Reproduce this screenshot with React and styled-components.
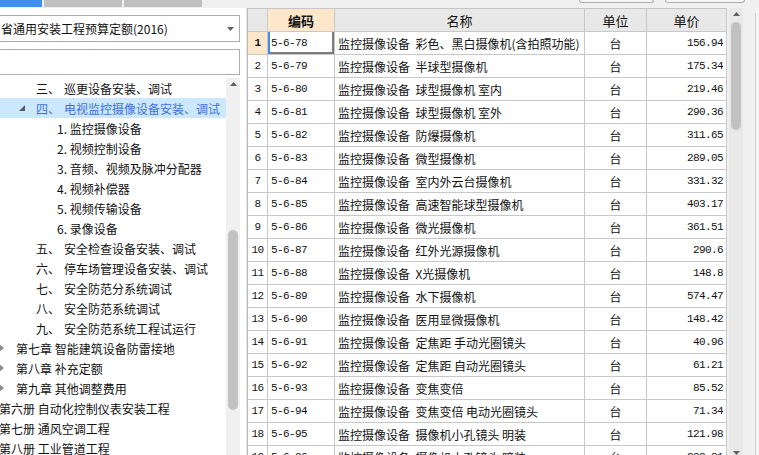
import React from 'react';
import styled, { createGlobalStyle } from 'styled-components';

const GlobalStyle = createGlobalStyle`
  html, body { margin: 0; padding: 0; background: #f0f0f0; }
  body { overflow: hidden; }
`;

const CJK = `"Noto Sans CJK SC", "Noto Sans", sans-serif`;
const NUM = `"Liberation Mono", "DejaVu Sans Mono", monospace`;

const Screen = styled.div`
  width: 759px;
  height: 455px;
  overflow: hidden;
  background: #f0f0f0;
  display: flex;
  flex-direction: column;
  font-family: ${CJK};
`;

const TopStrip = styled.div`
  height: 8px;
  flex: none;
  display: flex;
  align-items: flex-start;
  gap: 2px;
  background: #f0f0f0;
`;

const Tab = styled.div`
  width: ${p => p.$w}px;
  height: 7px;
  background: ${p => (p.$active ? '#3f8ef0' : '#c0c0c0')};
`;

const Spacer = styled.div`
  flex: 1;
`;

const ButtonStub = styled.div`
  width: ${p => p.$w}px;
  height: 3px;
  margin-right: ${p => p.$mr}px;
  box-sizing: border-box;
  border: 1px solid #adadad;
  border-top: none;
  border-radius: 0 0 3px 3px;
  background: #f7f7f7;
`;

const Main = styled.div`
  display: flex;
  align-items: flex-start;
  height: 447px;
`;

const LeftPanel = styled.div`
  width: 246px;
  height: 447px;
  flex: none;
  background: #fff;
  display: flex;
  flex-direction: column;
  padding-top: 7px;
  box-sizing: border-box;
`;

const Field = styled.div`
  width: 240px;
  height: ${p => p.$h}px;
  margin-top: ${p => p.$mt || 0}px;
  box-sizing: border-box;
  border: 1px solid #acacac;
  border-left: none;
  display: flex;
  align-items: center;
  justify-content: space-between;
  padding: 0 5px 0 1px;
  font-size: 12px;
  color: #111;
  white-space: nowrap;
  overflow: hidden;
  flex: none;
`;

const TreeArea = styled.div`
  margin-top: 3px;
  width: 240px;
  flex: 1;
  display: flex;
  overflow: hidden;
`;

const TreeList = styled.div`
  width: 226px;
  display: flex;
  flex-direction: column;
  overflow: hidden;
`;

const TreeRow = styled.div`
  height: 20px;
  flex: none;
  display: flex;
  align-items: center;
  padding-left: ${p => p.$indent}px;
  background: ${p => (p.$selected ? '#cce8ff' : 'transparent')};
  color: ${p => (p.$selected ? '#3f6fdc' : '#111')};
  font-size: 12px;
  white-space: nowrap;
`;

const Twisty = styled.span`
  width: ${p => p.$w}px;
  flex: none;
  display: flex;
  align-items: center;
  padding-left: ${p => p.$pl || 0}px;
  box-sizing: border-box;
`;

const NumLabel = styled.span`
  width: 28px;
  flex: none;
`;

const ScrollTrack = styled.div`
  width: 14px;
  flex: none;
  background: ${p => p.$bg};
  display: flex;
  flex-direction: column;
  align-items: center;
  height: ${p => (p.$h ? `${p.$h}px` : 'auto')};
  margin-left: ${p => p.$ml || 0}px;
`;

const ArrowBox = styled.div`
  height: 12px;
  flex: none;
  display: flex;
  align-items: center;
  justify-content: center;
`;

const Thumb = styled.div`
  width: 10px;
  height: ${p => p.$h}px;
  margin-top: ${p => p.$mt}px;
  border-radius: 5px;
  background: #c2c2c2;
  flex: none;
`;

const Divider = styled.div`
  width: 1px;
  height: 447px;
  background: #e2e2e2;
  flex: none;
`;

const TableGrid = styled.div`
  width: 480px;
  height: 447px;
  flex: none;
  box-sizing: border-box;
  border-left: 1px solid #bdbdbd;
  border-top: 1px solid #c6c6c6;
  background: #fff;
  display: flex;
  flex-direction: column;
  overflow: hidden;
`;

const GridRow = styled.div`
  display: grid;
  grid-template-columns: 20px 67px 250px 62px 80px;
  height: ${p => (p.$header ? 23 : 23)}px;
  flex: none;
  box-sizing: border-box;
  border-bottom: 1px solid #c8c8c8;
  background: ${p => (p.$header ? '#e8e8e8' : '#fff')};
`;

const Cell = styled.div`
  box-sizing: border-box;
  border-right: 1px solid #c8c8c8;
  display: flex;
  align-items: center;
  justify-content: ${p => p.$align || 'flex-start'};
  padding: ${p => (p.$align === 'flex-end' ? '0 3px 0 0' : p.$align === 'center' ? '0' : '0 0 0 3px')};
  background: ${p => (p.$peach ? '#fde6c9' : 'transparent')};
  font-family: ${p => (p.$num ? NUM : CJK)};
  font-size: ${p => (p.$num ? '11px' : p.$head ? '13px' : '12px')};
  letter-spacing: ${p => (p.$num ? '-0.6px' : '0')};
  font-weight: ${p => (p.$bold ? 700 : 400)};
  color: #111;
  white-space: nowrap;
  overflow: hidden;
  box-shadow: ${p => (p.$focus ? 'inset 2px 0 0 #3b8ff0, inset -2px -2px 0 #7c7c7c' : 'none')};
`;

const RightEdge = styled.div`
  flex: 1;
  height: 447px;
  display: flex;
`;

const EdgeFill = styled.div`
  width: ${p => (p.$w ? `${p.$w}px` : 'auto')};
  flex: ${p => (p.$w ? 'none' : 1)};
  background: ${p => p.$bg};
  margin-top: ${p => p.$mt || 0}px;
`;

const UpArrow = () => (
  <svg width="7" height="4" viewBox="0 0 7 4">
    <path d="M0 4 L3.5 0 L7 4 Z" fill="#606060" />
  </svg>
);

const DownArrow = () => (
  <svg width="7" height="4" viewBox="0 0 7 4">
    <path d="M0 0 L3.5 4 L7 0 Z" fill="#606060" />
  </svg>
);

const ExpandedIcon = () => (
  <svg width="6" height="6" viewBox="0 0 6 6">
    <path d="M6 0 L6 6 L0 6 Z" fill="#5a5a5a" />
  </svg>
);

const CollapsedIcon = () => (
  <svg width="5" height="8" viewBox="0 0 5 8" style={{ marginLeft: -1 }}>
    <path d="M0 0 L5 4 L0 8 Z" fill="#8c8c8c" />
  </svg>
);

const tree = [
  { kind: 'sec', num: '三、', text: '巡更设备安装、调试' },
  { kind: 'sec', num: '四、', text: '电视监控摄像设备安装、调试', open: true, selected: true },
  { kind: 'item', text: '1. 监控摄像设备' },
  { kind: 'item', text: '2. 视频控制设备' },
  { kind: 'item', text: '3. 音频、视频及脉冲分配器' },
  { kind: 'item', text: '4. 视频补偿器' },
  { kind: 'item', text: '5. 视频传输设备' },
  { kind: 'item', text: '6. 录像设备' },
  { kind: 'sec', num: '五、', text: '安全检查设备安装、调试' },
  { kind: 'sec', num: '六、', text: '停车场管理设备安装、调试' },
  { kind: 'sec', num: '七、', text: '安全防范分系统调试' },
  { kind: 'sec', num: '八、', text: '安全防范系统调试' },
  { kind: 'sec', num: '九、', text: '安全防范系统工程试运行' },
  { kind: 'chap', text: '第七章 智能建筑设备防雷接地' },
  { kind: 'chap', text: '第八章 补充定额' },
  { kind: 'chap', text: '第九章 其他调整费用' },
  { kind: 'book', text: '第六册 自动化控制仪表安装工程' },
  { kind: 'book', text: '第七册 通风空调工程' },
  { kind: 'book', text: '第八册 工业管道工程' },
];

const rows = [
  ['5-6-78', '彩色、黑白摄像机(含拍照功能)', '156.94'],
  ['5-6-79', '半球型摄像机', '175.34'],
  ['5-6-80', '球型摄像机 室内', '219.46'],
  ['5-6-81', '球型摄像机 室外', '290.36'],
  ['5-6-82', '防爆摄像机', '311.65'],
  ['5-6-83', '微型摄像机', '289.05'],
  ['5-6-84', '室内外云台摄像机', '331.32'],
  ['5-6-85', '高速智能球型摄像机', '403.17'],
  ['5-6-86', '微光摄像机', '361.51'],
  ['5-6-87', '红外光源摄像机', '290.6'],
  ['5-6-88', 'X光摄像机', '148.8'],
  ['5-6-89', '水下摄像机', '574.47'],
  ['5-6-90', '医用显微摄像机', '148.42'],
  ['5-6-91', '定焦距 手动光圈镜头', '40.96'],
  ['5-6-92', '定焦距 自动光圈镜头', '61.21'],
  ['5-6-93', '变焦变倍', '85.52'],
  ['5-6-94', '变焦变倍 电动光圈镜头', '71.34'],
  ['5-6-95', '摄像机小孔镜头 明装', '121.98'],
  ['5-6-96', '摄像机小孔镜头 暗装', '282.81'],
];

function TreeItem({ node }) {
  if (node.kind === 'sec') {
    return (
      <TreeRow $indent={18} $selected={node.selected}>
        <Twisty $w={18} $pl={1}>{node.open && <ExpandedIcon />}</Twisty>
        <NumLabel>{node.num}</NumLabel>
        <span>{node.text}</span>
      </TreeRow>
    );
  }
  if (node.kind === 'item') {
    return <TreeRow $indent={57}>{node.text}</TreeRow>;
  }
  if (node.kind === 'chap') {
    return (
      <TreeRow $indent={0}>
        <Twisty $w={16}><CollapsedIcon /></Twisty>
        <span>{node.text}</span>
      </TreeRow>
    );
  }
  return <TreeRow $indent={0}><span style={{ marginLeft: -1 }}>{node.text}</span></TreeRow>;
}

export default function App() {
  return (
    <Screen>
      <GlobalStyle />
      <TopStrip>
        <Tab $w={42} $active />
        <Tab $w={78} />
        <Tab $w={78} />
        <Spacer />
        <ButtonStub $w={75} $mr={9} />
        <ButtonStub $w={80} $mr={14} />
      </TopStrip>
      <Main>
        <LeftPanel>
          <Field $h={27}>
            <span>省通用安装工程预算定额(2016)</span>
            <DownArrow />
          </Field>
          <Field $h={26} $mt={7} />
          <TreeArea>
            <TreeList>
              {tree.map((n, i) => <TreeItem key={i} node={n} />)}
            </TreeList>
            <ScrollTrack $bg="#f0f0f0">
              <ArrowBox><UpArrow /></ArrowBox>
              <Thumb $mt={140} $h={180} />
            </ScrollTrack>
          </TreeArea>
        </LeftPanel>
        <Divider />
        <TableGrid>
          <GridRow $header>
            <Cell />
            <Cell $align="center" $peach $bold $head>编码</Cell>
            <Cell $align="center" $head>名称</Cell>
            <Cell $align="center" $head>单位</Cell>
            <Cell $align="center" $head>单价</Cell>
          </GridRow>
          {rows.map(([code, name, price], i) => (
            <GridRow key={code}>
              <Cell $align="center" $num $peach={i === 0} $bold={i === 0}>{i + 1}</Cell>
              <Cell $num $focus={i === 0}>{code}</Cell>
              <Cell>监控摄像设备&nbsp;&nbsp;{name}</Cell>
              <Cell $align="center">台</Cell>
              <Cell $align="flex-end" $num>{price}</Cell>
            </GridRow>
          ))}
        </TableGrid>
        <ScrollTrack $bg="#e8e8e8" $h={451} $ml={2}>
          <ArrowBox><UpArrow /></ArrowBox>
          <Thumb $mt={2} $h={108} />
          <Spacer />
          <ArrowBox><DownArrow /></ArrowBox>
        </ScrollTrack>
        <RightEdge>
          <EdgeFill $w={12} $bg="#f0f0f0" />
          <EdgeFill $w={1} $bg="#cfcfcf" $mt={5} />
          <EdgeFill $bg="#f5f5f5" />
        </RightEdge>
      </Main>
    </Screen>
  );
}
